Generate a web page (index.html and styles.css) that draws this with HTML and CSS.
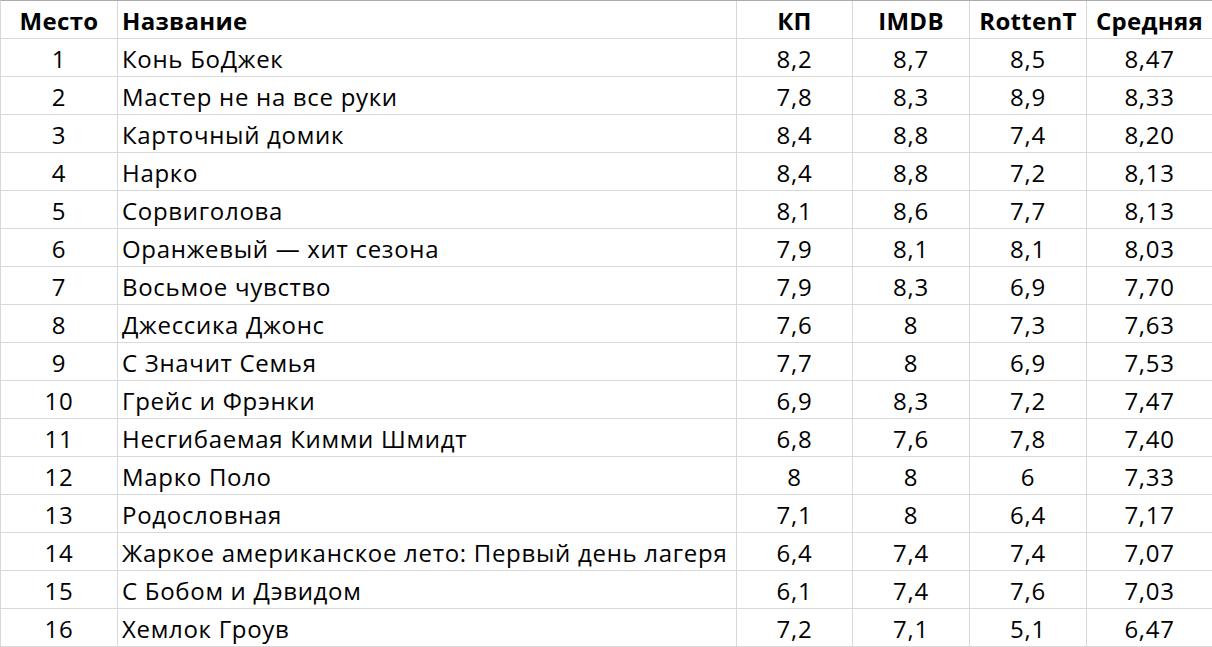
FILE: index.html
```html
<!DOCTYPE html>
<html lang="ru">
<head>
<meta charset="utf-8">
<title>Рейтинг сериалов</title>
<link rel="stylesheet" href="styles.css">
</head>
<body>
<div class="sheet">
  <div class="cell head num">Место</div><div class="cell head name">Название</div><div class="cell head num">КП</div><div class="cell head num">IMDB</div><div class="cell head num">RottenT</div><div class="cell head num">Средняя</div>
  <div class="cell num">1</div><div class="cell name">Конь БоДжек</div><div class="cell num">8,2</div><div class="cell num">8,7</div><div class="cell num">8,5</div><div class="cell num">8,47</div>
  <div class="cell num">2</div><div class="cell name">Мастер не на все руки</div><div class="cell num">7,8</div><div class="cell num">8,3</div><div class="cell num">8,9</div><div class="cell num">8,33</div>
  <div class="cell num">3</div><div class="cell name">Карточный домик</div><div class="cell num">8,4</div><div class="cell num">8,8</div><div class="cell num">7,4</div><div class="cell num">8,20</div>
  <div class="cell num">4</div><div class="cell name">Нарко</div><div class="cell num">8,4</div><div class="cell num">8,8</div><div class="cell num">7,2</div><div class="cell num">8,13</div>
  <div class="cell num">5</div><div class="cell name">Сорвиголова</div><div class="cell num">8,1</div><div class="cell num">8,6</div><div class="cell num">7,7</div><div class="cell num">8,13</div>
  <div class="cell num">6</div><div class="cell name">Оранжевый — хит сезона</div><div class="cell num">7,9</div><div class="cell num">8,1</div><div class="cell num">8,1</div><div class="cell num">8,03</div>
  <div class="cell num">7</div><div class="cell name">Восьмое чувство</div><div class="cell num">7,9</div><div class="cell num">8,3</div><div class="cell num">6,9</div><div class="cell num">7,70</div>
  <div class="cell num">8</div><div class="cell name">Джессика Джонс</div><div class="cell num">7,6</div><div class="cell num">8</div><div class="cell num">7,3</div><div class="cell num">7,63</div>
  <div class="cell num">9</div><div class="cell name">С Значит Семья</div><div class="cell num">7,7</div><div class="cell num">8</div><div class="cell num">6,9</div><div class="cell num">7,53</div>
  <div class="cell num">10</div><div class="cell name">Грейс и Фрэнки</div><div class="cell num">6,9</div><div class="cell num">8,3</div><div class="cell num">7,2</div><div class="cell num">7,47</div>
  <div class="cell num">11</div><div class="cell name">Несгибаемая Кимми Шмидт</div><div class="cell num">6,8</div><div class="cell num">7,6</div><div class="cell num">7,8</div><div class="cell num">7,40</div>
  <div class="cell num">12</div><div class="cell name">Марко Поло</div><div class="cell num">8</div><div class="cell num">8</div><div class="cell num">6</div><div class="cell num">7,33</div>
  <div class="cell num">13</div><div class="cell name">Родословная</div><div class="cell num">7,1</div><div class="cell num">8</div><div class="cell num">6,4</div><div class="cell num">7,17</div>
  <div class="cell num">14</div><div class="cell name">Жаркое американское лето: Первый день лагеря</div><div class="cell num">6,4</div><div class="cell num">7,4</div><div class="cell num">7,4</div><div class="cell num">7,07</div>
  <div class="cell num">15</div><div class="cell name">С Бобом и Дэвидом</div><div class="cell num">6,1</div><div class="cell num">7,4</div><div class="cell num">7,6</div><div class="cell num">7,03</div>
  <div class="cell num">16</div><div class="cell name">Хемлок Гроув</div><div class="cell num">7,2</div><div class="cell num">7,1</div><div class="cell num">5,1</div><div class="cell num">6,47</div>
</div>
</body>
</html>
```

FILE: styles.css
```css
html, body {
  margin: 0;
  padding: 0;
  background: #ffffff;
  overflow: hidden;
}

body {
  width: 1212px;
  height: 647px;
}

.sheet {
  display: grid;
  grid-template-columns: 117px 619px 116px 117px 117px 126px;
  grid-auto-rows: 38px;
  width: 1213px;
  border-left: 1px solid #d9d9d9;
  border-top: 1px solid #ababab;
  font-family: "Open Sans", "Noto Sans", sans-serif;
  font-size: 24px;
  letter-spacing: 0.7px;
  color: #000000;
}

.cell {
  box-sizing: border-box;
  height: 38px;
  border-right: 1px solid #d9d9d9;
  border-bottom: 1px solid #d9d9d9;
  padding-top: 3px;
  line-height: 34px;
  white-space: nowrap;
  overflow: hidden;
}

.num {
  text-align: center;
}

.name {
  text-align: left;
  padding-left: 4px;
}

.head {
  font-weight: 700;
  letter-spacing: 0.3px;
}
```
